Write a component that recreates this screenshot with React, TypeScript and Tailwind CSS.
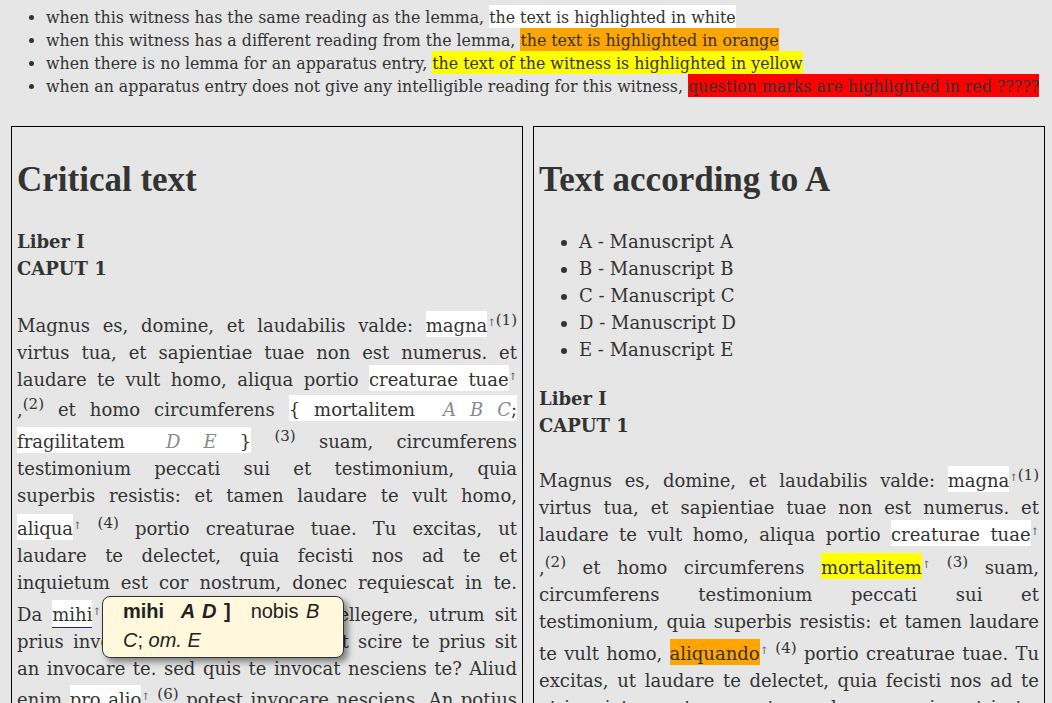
import React from "react";

const Hl = ({ c, children }: { c: string; children: React.ReactNode }) => (
  <span className={`${c} pt-[4px] pb-[1px]`}>{children}</span>
);
const W = ({ children }: { children: React.ReactNode }) => <Hl c="bg-white">{children}</Hl>;
const Sup = ({ children }: { children: React.ReactNode }) => (
  <span className="relative -top-[7px] text-[15px] leading-none">{children}</span>
);
const Ar = () => <span className="relative -top-[6px] text-[10px] leading-none text-[#555]">↑</span>;
const Sig = ({ children }: { children: React.ReactNode }) => (
  <span className="italic text-[#8a8a8a]">{children}</span>
);
const Line = ({ children, className = "" }: { children: React.ReactNode; className?: string }) => (
  <div className={`text-justify [text-align-last:justify] ${className}`}>{children}</div>
);

const Heading = ({ children }: { children: React.ReactNode }) => (
  <h2 className="mt-[33px] font-['Liberation_Serif',serif] text-[35px] font-bold leading-[40px]">{children}</h2>
);

export default function App() {
  return (
    <div className="min-h-screen overflow-hidden bg-[#e6e6e6] font-['DejaVu_Serif',serif] text-[#333]">
      <ul className="list-disc pl-[46px] pt-[6px] text-[15.8px] leading-[23px]">
        <li>
          when this witness has the same reading as the lemma, <span className="bg-white pt-[3px] pb-[1px]">the text is highlighted in white</span>
        </li>
        <li>
          when this witness has a different reading from the lemma, <span className="bg-[#ffa500] pt-[3px] pb-[1px]">the text is highlighted in orange</span>
        </li>
        <li>
          when there is no lemma for an apparatus entry, <span className="bg-[#ffff00] pt-[3px] pb-[1px]">the text of the witness is highlighted in yellow</span>
        </li>
        <li>
          when an apparatus entry does not give any intelligible reading for this witness, <span className="bg-[#ff0000] pt-[3px] pb-[1px]">question marks are highlighted in red ?????</span>
        </li>
      </ul>

      <div className="mt-[28px] flex gap-[10px] pl-[11px] text-[18px]">
        {/* Left panel */}
        <div className="relative w-[512px] shrink-0 border border-black px-[5px] pb-[40px]">
          <Heading>Critical text</Heading>
          <div className="mt-[28px] font-bold leading-[27px]">
            Liber I<br />CAPUT 1
          </div>
          <div className="mt-[27px] leading-[27px]">
            <Line className="pt-[3px]">
              Magnus es, domine, et laudabilis valde: <W>magna</W><Ar /><Sup>(1)</Sup>
            </Line>
            <Line>virtus tua, et sapientiae tuae non est numerus. et</Line>
            <Line>
              laudare te vult homo, aliqua portio <W>creaturae tuae</W><Ar />
            </Line>
            <Line className="pt-[3px]">
              ,<Sup>(2)</Sup> et homo circumferens <W>{"{"} mortalitem <span className="pl-[14px]" /><Sig>A B C</Sig>;</W>
            </Line>
            <Line className="pt-[5px]">
              <W>
                fragilitatem <span className="pl-[18px]" /><Sig>D E</Sig> {"}"}
              </W>{" "}
              <Sup>(3)</Sup> suam, circumferens
            </Line>
            <Line>testimonium peccati sui et testimonium, quia</Line>
            <Line>superbis resistis: et tamen laudare te vult homo,</Line>
            <Line className="pt-[6px]">
              <W>aliqua</W><Ar /> <Sup>(4)</Sup> portio creaturae tuae. Tu excitas, ut
            </Line>
            <Line>laudare te delectet, quia fecisti nos ad te et</Line>
            <Line>inquietum est cor nostrum, donec requiescat in te.</Line>
            <Line className="pt-[5px]">
              Da <span className="bg-white pt-[4px] pb-[2px] border-b border-[#1a1ad0]">mihi</span><Ar /> <Sup>(5)</Sup>, domine, scire et intellegere, utrum sit
            </Line>
            <Line>prius invocare te an laudare te, et scire te prius sit</Line>
            <Line>an invocare te. sed quis te invocat nesciens te? Aliud</Line>
            <Line className="pt-[4px]">
              enim <W>pro alio</W><Ar /> <Sup>(6)</Sup> potest invocare nesciens. An potius
            </Line>
            <Line>invocaris, ut sciaris? Quomodo autem invocabunt, in quem</Line>
          </div>

          <div className="absolute left-[90px] top-[469px] w-[242px] rounded-[8px] border border-[#333] bg-[#fff8dc] pl-[20px] font-['Liberation_Sans',Arial,sans-serif] text-[20px] leading-[29px] pt-[0px] pb-[2px] text-[#222] shadow-[4px_4px_6px_rgba(0,0,0,0.45)]">
            <div className="whitespace-nowrap">
              <span className="font-bold">
                mihi <span className="ml-[11px] italic">A <span className="ml-[2px]">D</span></span> <span className="ml-[2px]">]</span>
              </span>
              <span className="ml-[20px]">
                nobis <i className="ml-[2px]">B</i>
              </span>
            </div>
            <div className="whitespace-nowrap">
              <i>C</i>; <i>om.</i> <i>E</i>
            </div>
          </div>
        </div>

        {/* Right panel */}
        <div className="relative w-[512px] shrink-0 border border-black px-[5px] pb-[40px]">
          <Heading>Text according to A</Heading>
          <ul className="mt-[28px] list-disc pl-[40px] leading-[27px]">
            <li>A - Manuscript A</li>
            <li>B - Manuscript B</li>
            <li>C - Manuscript C</li>
            <li>D - Manuscript D</li>
            <li>E - Manuscript E</li>
          </ul>
          <div className="mt-[22px] font-bold leading-[27px]">
            Liber I<br />CAPUT 1
          </div>
          <div className="mt-[27px] leading-[27px]">
            <Line className="pt-[1px]">
              Magnus es, domine, et laudabilis valde: <W>magna</W><Ar /><Sup>(1)</Sup>
            </Line>
            <Line>virtus tua, et sapientiae tuae non est numerus. et</Line>
            <Line>
              laudare te vult homo, aliqua portio <W>creaturae tuae</W><Ar />
            </Line>
            <Line className="pt-[6px]">
              ,<Sup>(2)</Sup> et homo circumferens <Hl c="bg-[#ffff00]">mortalitem</Hl><Ar /> <Sup>(3)</Sup> suam,
            </Line>
            <Line>circumferens testimonium peccati sui et</Line>
            <Line>testimonium, quia superbis resistis: et tamen laudare</Line>
            <Line className="pt-[5px]">
              te vult homo, <Hl c="bg-[#ffa500]">aliquando</Hl><Ar /> <Sup>(4)</Sup> portio creaturae tuae. Tu
            </Line>
            <Line>excitas, ut laudare te delectet, quia fecisti nos ad te</Line>
            <Line>et inquietum est cor nostrum, donec requiescat in te.</Line>
            <Line>Da mihi, domine, scire et intellegere, utrum sit prius</Line>
          </div>
        </div>
      </div>
    </div>
  );
}
